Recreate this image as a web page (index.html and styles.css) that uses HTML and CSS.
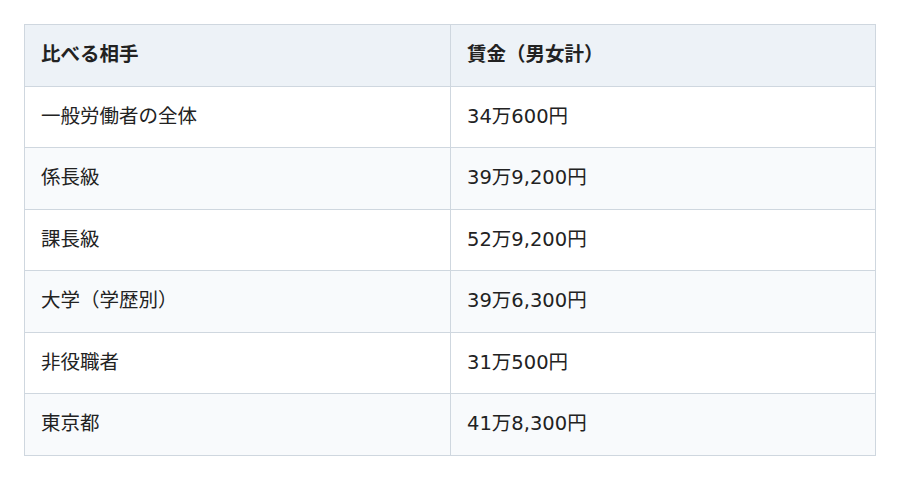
FILE: index.html
```html
<!DOCTYPE html>
<html lang="ja">
<head>
<meta charset="utf-8">
<link rel="stylesheet" href="styles.css">
</head>
<body>
<table class="wage-table">
  <thead>
    <tr><th class="col-a">比べる相手</th><th>賃金（男女計）</th></tr>
  </thead>
  <tbody>
    <tr><td>一般労働者の全体</td><td>34万600円</td></tr>
    <tr><td>係長級</td><td>39万9,200円</td></tr>
    <tr><td>課長級</td><td>52万9,200円</td></tr>
    <tr><td>大学（学歴別）</td><td>39万6,300円</td></tr>
    <tr><td>非役職者</td><td>31万500円</td></tr>
    <tr><td>東京都</td><td>41万8,300円</td></tr>
  </tbody>
</table>
</body>
</html>
```
FILE: styles.css
```css
html, body {
  margin: 0;
  background: #ffffff;
}
body {
  padding: 24px;
  font-family: "DejaVu Sans", "Noto Sans CJK JP", sans-serif;
  color: #222;
}
.wage-table {
  width: 852px;
  border-collapse: collapse;
  font-size: 19.5px;
  line-height: 24.5px;
}
.wage-table th,
.wage-table td {
  border: 1px solid #cfd7df;
  padding: 18px 16px;
  text-align: left;
  vertical-align: middle;
}
.wage-table th {
  background: #edf2f7;
  font-weight: 700;
}
.wage-table .col-a {
  width: 393px;
}
.wage-table tbody tr:nth-child(even) td {
  background: #f8fafc;
}
```
